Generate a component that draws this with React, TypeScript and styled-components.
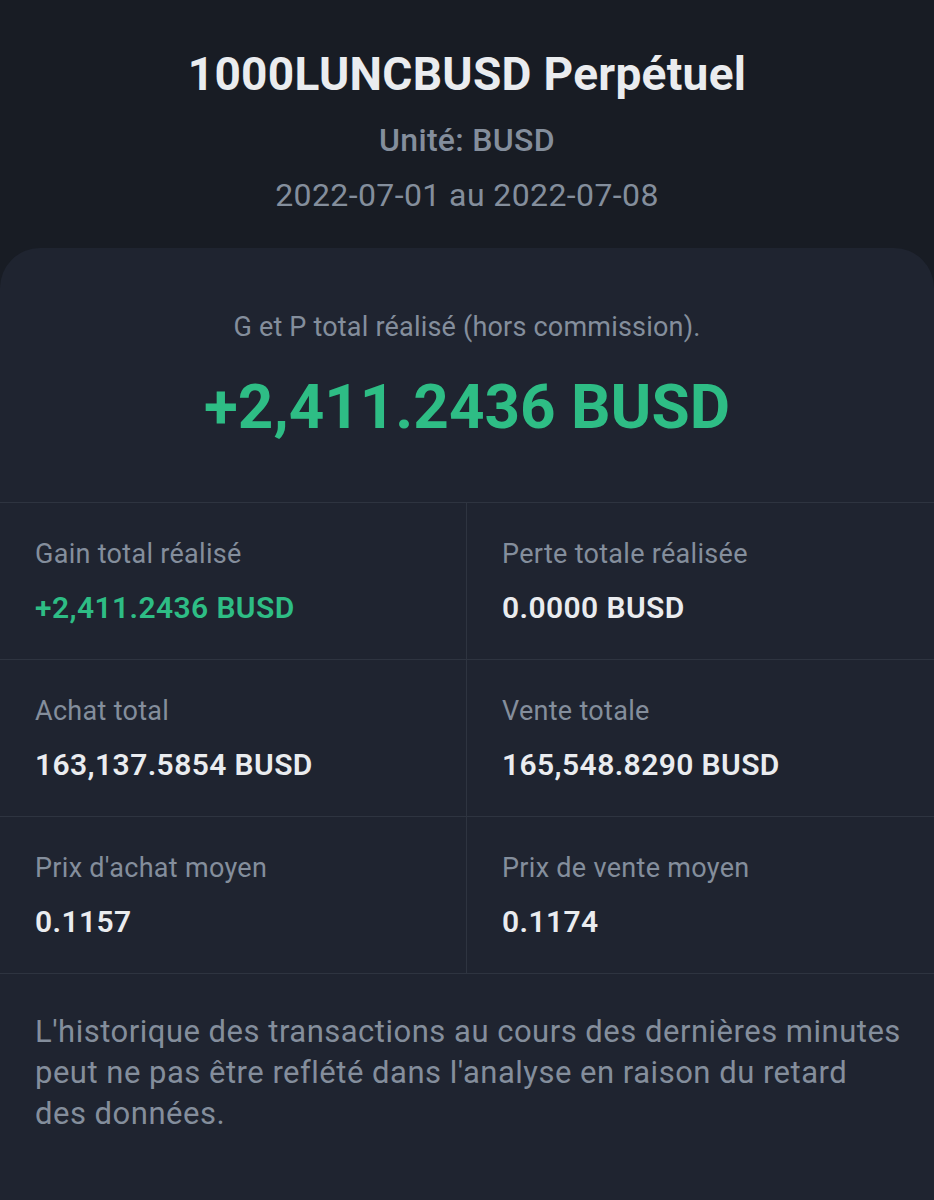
import React from 'react';
import styled, { createGlobalStyle } from 'styled-components';

const GlobalStyle = createGlobalStyle`
  html, body {
    margin: 0;
    padding: 0;
    background: #181c24;
  }
  body {
    font-family: Roboto, 'Liberation Sans', sans-serif;
    -webkit-font-smoothing: antialiased;
  }
`;

const Page = styled.div`
  width: 934px;
  min-height: 1200px;
  background: #181c24;
  display: flex;
  flex-direction: column;
`;

const Header = styled.header`
  display: flex;
  flex-direction: column;
  align-items: center;
  padding: 48px 0 33px;
`;

const Title = styled.h1`
  margin: 0;
  font-size: 46px;
  line-height: 52px;
  font-weight: 700;
  color: #eaecef;
  letter-spacing: 0.3px;
`;

const Unit = styled.div`
  margin-top: 20px;
  font-size: 32px;
  line-height: 40px;
  font-weight: 500;
  color: #848e9c;
  letter-spacing: 0.3px;
`;

const Range = styled.div`
  margin-top: 15px;
  font-size: 32px;
  line-height: 40px;
  font-weight: 400;
  color: #848e9c;
  letter-spacing: 0.4px;
`;

const Card = styled.section`
  flex: 1;
  background: #1f2430;
  border-radius: 40px 40px 0 0;
  display: flex;
  flex-direction: column;
`;

const Summary = styled.div`
  display: flex;
  flex-direction: column;
  align-items: center;
  padding: 61px 0 59px;
  border-bottom: 1px solid #2e3440;
`;

const SummaryLabel = styled.div`
  font-size: 27px;
  line-height: 36px;
  color: #848e9c;
  letter-spacing: 0.2px;
`;

const BigValue = styled.div`
  margin-top: 26px;
  font-size: 62px;
  line-height: 72px;
  font-weight: 700;
  color: #2ebd85;
`;

const Grid = styled.div`
  display: grid;
  grid-template-columns: 467px 1fr;
`;

const Cell = styled.div<{ $right?: boolean }>`
  display: flex;
  flex-direction: column;
  gap: 18px;
  padding: 33px 35px;
  border-bottom: 1px solid #2e3440;
  border-right: ${(p) => (p.$right ? 'none' : '1px solid #2e3440')};
`;

const Label = styled.div`
  font-size: 27px;
  line-height: 36px;
  color: #848e9c;
  letter-spacing: 0.3px;
`;

const Value = styled.div<{ $up?: boolean }>`
  font-size: 30px;
  line-height: 36px;
  font-weight: 600;
  color: ${(p) => (p.$up ? '#2ebd85' : '#eaecef')};
  letter-spacing: 0.4px;
`;

const Note = styled.p`
  margin: 0;
  padding: 37px 31px 0 35px;
  font-size: 31px;
  line-height: 41px;
  color: #848e9c;
  letter-spacing: 0.5px;
`;

const stats = [
  { label: 'Gain total réalisé', value: '+2,411.2436 BUSD', up: true },
  { label: 'Perte totale réalisée', value: '0.0000 BUSD' },
  { label: 'Achat total', value: '163,137.5854 BUSD' },
  { label: 'Vente totale', value: '165,548.8290 BUSD' },
  { label: "Prix d'achat moyen", value: '0.1157' },
  { label: 'Prix de vente moyen', value: '0.1174' },
];

const App = () => {
  return (
    <>
      <GlobalStyle />
      <Page>
        <Header>
          <Title>1000LUNCBUSD Perpétuel</Title>
          <Unit>Unité: BUSD</Unit>
          <Range>2022-07-01 au 2022-07-08</Range>
        </Header>
        <Card>
          <Summary>
            <SummaryLabel>G et P total réalisé (hors commission).</SummaryLabel>
            <BigValue>+2,411.2436 BUSD</BigValue>
          </Summary>
          <Grid>
            {stats.map((s, i) => (
              <Cell key={s.label} $right={i % 2 === 1}>
                <Label>{s.label}</Label>
                <Value $up={s.up}>{s.value}</Value>
              </Cell>
            ))}
          </Grid>
          <Note>
            L'historique des transactions au cours des dernières minutes peut ne pas être reflété
            dans l'analyse en raison du retard des données.
          </Note>
        </Card>
      </Page>
    </>
  );
};

export default App;
